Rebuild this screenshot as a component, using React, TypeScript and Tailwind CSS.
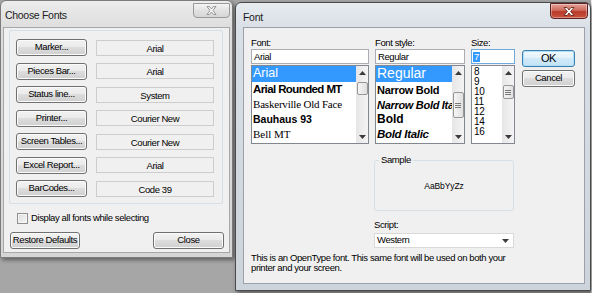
import React from "react";

const sans = "font-['Liberation_Sans',Arial,sans-serif]";
const serif = "font-['Liberation_Serif','Times_New_Roman',serif]";
const ui = "text-[9.5px] tracking-[-0.4px]";

type Kids = { children?: React.ReactNode; className?: string };

const Btn = ({ children, className = "" }: Kids) => (
  <div
    className={`flex items-center justify-center whitespace-nowrap rounded-[3px] border border-[#707070] bg-[linear-gradient(#f2f2f2,#ebebeb_45%,#dddddd_50%,#cfcfcf)] shadow-[inset_0_0_0_1px_#fbfbfb] text-black ${ui} ${className}`}
  >
    {children}
  </div>
);

const Arrow = ({ down }: { down?: boolean }) => (
  <svg width="7" height="4" viewBox="0 0 7 4">
    <path d={down ? "M0 0 L7 0 L3.5 4 Z" : "M0 4 L3.5 0 L7 4 Z"} fill="#3c3c3c" />
  </svg>
);

const Grip = () => (
  <div className="flex flex-col gap-[1px]">
    <div className="h-px w-[6px] bg-[#7a7a7a]" />
    <div className="h-px w-[6px] bg-[#7a7a7a]" />
    <div className="h-px w-[6px] bg-[#7a7a7a]" />
  </div>
);

// thumb offset/height differ per list, passed as full class names
const Scroll = ({ thumb, grip }: { thumb: string; grip?: boolean }) => (
  <div className="flex w-[12px] flex-col bg-[linear-gradient(90deg,#e6e6e6,#f4f4f4)]">
    <div className="flex h-[14px] items-center justify-center">
      <Arrow />
    </div>
    <div
      className={`mx-auto flex w-[11px] items-center justify-center rounded-[2px] border border-[#979797] bg-[linear-gradient(90deg,#f5f5f5,#e0e0e0)] ${thumb}`}
    >
      {grip && <Grip />}
    </div>
    <div className="flex-1" />
    <div className="flex h-[12px] items-center justify-center">
      <Arrow down />
    </div>
  </div>
);

const Row = ({ label, value }: { label: string; value: string }) => (
  <div className="flex h-[17px] items-center gap-[9px]">
    <Btn className="h-[17px] w-[71px]">{label}</Btn>
    <div
      className={`flex h-[16px] w-[118px] items-start justify-center border border-[#cdcdcd] bg-[#f0f0f0] pt-[1px] text-black ${ui}`}
    >
      {value}
    </div>
  </div>
);

const ChooseFonts = () => {
  const rows = [
    ["Marker...", "Arial"],
    ["Pieces Bar...", "Arial"],
    ["Status line...", "System"],
    ["Printer...", "Courier New"],
    ["Screen Tables...", "Courier New"],
    ["Excel Report...", "Arial"],
    ["BarCodes...", "Code 39"],
  ];
  return (
    <div
      className={`absolute left-0 top-0 flex h-[258px] w-[233px] flex-col rounded-t-[6px] border border-[#7b7b7b] bg-[linear-gradient(#ececec,#dedede_26px,#d6d6d6)] px-[2px] pb-[4px] shadow-[2px_2px_4px_rgba(0,0,0,0.45)] ${sans}`}
    >
      <div className="flex h-[26px] items-start justify-between">
        <span className="pl-[2px] pt-[8px] text-[10.5px] tracking-[-0.3px] leading-[12px] text-[#222]">
          Choose Fonts
        </span>
        <div className="mt-[2px] flex h-[15px] w-[37px] items-center justify-center rounded-b-[4px] border border-[#9a9a9a] bg-[linear-gradient(#f4f4f4,#e2e2e2_50%,#d6d6d6)]">
          <svg width="11" height="9" viewBox="0 0 11 9">
            <path
              d="M1 0.5 L3.5 0.5 L5.5 3 L7.5 0.5 L10 0.5 L7 4.5 L10 8.5 L7.5 8.5 L5.5 6 L3.5 8.5 L1 8.5 L4 4.5 Z"
              fill="#f7f7f7"
              stroke="#8c8c8c"
              strokeWidth="0.9"
            />
          </svg>
        </div>
      </div>
      <div className="flex flex-1 flex-col border border-[#a7a7a7] bg-[#f0f0f0] px-[5px] pt-[2px]">
        <div className="flex h-[174px] w-[214px] flex-col gap-[6.5px] rounded-[2px] border border-[#d5dfe5] pl-[6px] pt-[8px]">
          {rows.map(([l, v]) => (
            <Row key={l} label={l} value={v} />
          ))}
        </div>
        <div className={`mt-[8px] flex h-[12px] items-center gap-[3px] pl-[8px] text-black ${ui}`}>
          <div className="h-[11px] w-[11px] border border-[#8f8f8f] bg-[linear-gradient(135deg,#dcdcdc,#f6f6f6)] shadow-[inset_0_0_0_1px_#f4f4f4]" />
          <span>Display all fonts while selecting</span>
        </div>
        <div className="mt-[8px] flex items-center justify-between pl-[1px]">
          <Btn className="h-[17px] w-[70px]">Restore Defaults</Btn>
          <Btn className="h-[17px] w-[71px]">Close</Btn>
        </div>
      </div>
    </div>
  );
};

const FontDialog = () => (
  <div
    className={`absolute left-[235px] top-[2px] flex h-[289px] w-[356px] flex-col rounded-t-[6px] border border-[#4a4a4a] bg-[linear-gradient(#e6ebf0,#d9dfe6_26px,#cdd3da)] pb-[6px] pl-[7px] pr-[5px] shadow-[2px_2px_4px_rgba(0,0,0,0.5)] ${sans}`}
  >
    <div className="flex h-[24px] items-start justify-between">
      <span className="pt-[8px] text-[10.5px] tracking-[-0.3px] leading-[12px] text-[#1a1a1a]">Font</span>
      <div className="-mr-[3px] flex h-[16px] w-[38px] items-center justify-center rounded-b-[4px] border border-[#5e2020] bg-[linear-gradient(#e3a39a,#cf6a5c_45%,#b8392a_55%,#c9533f)] shadow-[inset_0_0_0_1px_rgba(255,255,255,0.35)]">
        <svg width="12" height="9" viewBox="0 0 12 9">
          <path
            d="M1 0.5 L4 0.5 L6 3 L8 0.5 L11 0.5 L7.6 4.5 L11 8.5 L8 8.5 L6 6 L4 8.5 L1 8.5 L4.4 4.5 Z"
            fill="#ffffff"
            stroke="#5a1a12"
            strokeWidth="0.8"
          />
        </svg>
      </div>
    </div>
    <div className={`flex flex-1 flex-col border border-[#9aa1a9] bg-[#f0f0f0] pl-[7px] pt-[9px] text-black ${ui}`}>
      <div className="flex">
        {/* Font */}
        <div className="flex w-[118px] flex-col">
          <div className="h-[12px] leading-[12px]">Font:</div>
          <div className="h-[15px] border border-[#abadb3] bg-white pl-[2px] leading-[13px]">Arial</div>
          <div className="mt-[1px] flex h-[79px] border border-[#828790] bg-white">
            <div className="flex flex-1 flex-col overflow-hidden whitespace-nowrap tracking-normal">
              <div className="h-[16px] bg-[#3399ff] pl-[1px] text-[12.5px] leading-[15px] text-white">Arial</div>
              <div className="h-[15px] pl-[1px] text-[11.5px] font-bold tracking-[-0.6px] leading-[15px]">
                Arial Rounded MT
              </div>
              <div className={`h-[15px] pl-[1px] text-[11px] tracking-[-0.2px] leading-[15px] ${serif}`}>
                Baskerville Old Face
              </div>
              <div className="h-[15px] pl-[1px] text-[10.5px] font-black tracking-[0px] leading-[15px]">Bauhaus 93</div>
              <div className={`h-[15px] pl-[1px] text-[11px] leading-[15px] ${serif}`}>Bell MT</div>
            </div>
            <Scroll thumb="mt-[2px] h-[13px]" />
          </div>
        </div>
        {/* Font style */}
        <div className="ml-[6px] flex w-[90px] flex-col">
          <div className="h-[12px] leading-[12px]">Font style:</div>
          <div className="h-[15px] border border-[#abadb3] bg-white pl-[2px] leading-[13px]">Regular</div>
          <div className="mt-[1px] flex h-[79px] border border-[#828790] bg-white">
            <div className="flex flex-1 flex-col overflow-hidden whitespace-nowrap tracking-normal">
              <div className="h-[16px] bg-[#3399ff] pl-[1px] text-[14px] leading-[15px] text-white">Regular</div>
              <div className="h-[16px] pl-[1px] text-[11px] font-bold tracking-[-0.3px] leading-[16px]">
                Narrow Bold
              </div>
              <div className="h-[14px] pl-[1px] text-[11px] font-bold italic tracking-[-0.3px] leading-[14px]">
                Narrow Bold Italic
              </div>
              <div className="h-[15px] pl-[1px] text-[12px] font-bold leading-[15px]">Bold</div>
              <div className="h-[15px] pl-[1px] text-[11.5px] font-bold italic tracking-[-0.3px] leading-[15px]">
                Bold Italic
              </div>
            </div>
            <Scroll thumb="mt-[12px] h-[26px]" grip />
          </div>
        </div>
        {/* Size */}
        <div className="ml-[6px] flex w-[44px] flex-col">
          <div className="h-[12px] leading-[12px]">Size:</div>
          <div className="flex h-[15px] items-center border border-[#6fa8dc] bg-white pl-[1px]">
            <span className="h-[10px] bg-[#3399ff] px-[1px] leading-[10px] text-white">7</span>
          </div>
          <div className="mt-[1px] flex h-[79px] border border-[#828790] bg-white">
            <div className="flex flex-1 flex-col overflow-hidden pt-[1px] text-[10px] leading-[10px] tracking-[-0.2px]">
              {["8", "9", "10", "11", "12", "14", "16"].map((s) => (
                <div key={s} className="h-[10px] pl-[2px]">
                  {s}
                </div>
              ))}
            </div>
            <Scroll thumb="mt-[5px] h-[14px]" grip />
          </div>
        </div>
        {/* Buttons */}
        <div className="ml-[7px] flex flex-col gap-[3px] pt-[13px]">
          <div className="flex h-[17px] w-[53px] items-center justify-center rounded-[3px] border border-[#3c7fb1] bg-[linear-gradient(#f2f9fd,#e3f2fb_45%,#d1eafa_50%,#c4e2f6)] text-[11px] shadow-[inset_0_0_0_1px_#aee0f7]">
            OK
          </div>
          <Btn className="h-[17px] w-[53px]">Cancel</Btn>
        </div>
      </div>

      <div className="ml-[123px] mt-[16px] flex w-[140px] flex-col">
        <div className="relative h-[51px] rounded-[3px] border border-[#d5dfe5]">
          <span className="absolute -top-[7px] left-[4px] bg-[#f0f0f0] px-[2px] leading-[12px]">Sample</span>
          <div className="flex h-full items-center justify-center pt-[2px] text-[8.5px] tracking-[-0.1px]">AaBbYyZz</div>
        </div>
        <div className="mt-[8px] h-[12px] leading-[12px]">Script:</div>
        <div className="mt-[2px] flex h-[15px] items-center justify-between border border-[#d9d9d9] bg-white pl-[2px] pr-[4px]">
          <span>Western</span>
          <Arrow down />
        </div>
      </div>

      <div className="mt-[5px] w-[262px] leading-[10px]">
        This is an OpenType font. This same font will be used on both your printer and your screen.
      </div>
    </div>
  </div>
);

export default function App() {
  return (
    <div className="relative h-[293px] w-[592px] overflow-hidden bg-[#a6a6a6]">
      <div className="absolute right-0 top-0 h-full w-[1px] bg-[#f2f2f2]" />
      <ChooseFonts />
      <FontDialog />
    </div>
  );
}
